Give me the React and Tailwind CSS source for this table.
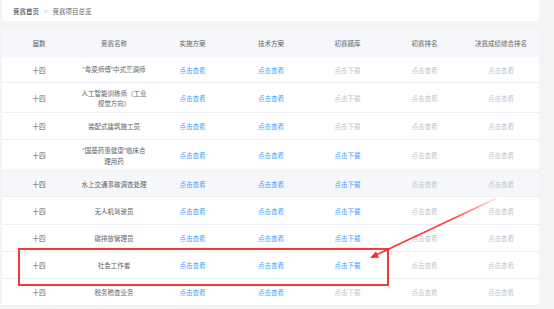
import React from "react";

const Q = ({ children }) => (
  <span style={{ fontFamily: '"Liberation Sans", sans-serif' }}>{children}</span>
);

const rows = [
  { name: [<><Q>“</Q>粤菜师傅<Q>”</Q>中式烹调师</>], h: "h-[26px]", dl: false },
  { name: ["人工智能训练师（工业", "视觉方向）"], h: "h-[30px]", dl: false },
  { name: ["装配式建筑施工员"], h: "h-[27px]", dl: false },
  { name: [<><Q>“</Q>国基药惠健康<Q>”</Q>临床合</>, "理用药"], h: "h-[31px]", dl: true },
  { name: ["水上交通事故调查处理"], h: "h-[26px]", dl: true, hover: true },
  { name: ["无人机驾驶员"], h: "h-[28px]", dl: true },
  { name: ["碳排放管理员"], h: "h-[27px]", dl: true },
  { name: ["社会工作者"], h: "h-[27px]", dl: true },
  { name: ["税务稽查业务"], h: "h-[27px]", dl: false },
];

const cols = "grid grid-cols-[74px_76px_81px_76px_77px_77px_76px]";

export default function App() {
  return (
    <div
      className="relative w-[554px] h-[309px] overflow-hidden bg-[#f3f4f6] text-[6.5px] leading-[10px] text-[#606266]"
      style={{ fontFamily: '"Noto Sans CJK SC", "Noto Sans", sans-serif' }}
    >
      <div className="ml-[2px] w-[537px] h-[21px] bg-white flex items-center px-[11px] gap-[3px]">
        <span className="text-[#303133]">竞赛首页</span>
        <span className="text-[#c0c4cc] mx-[2px]">&gt;</span>
        <span className="text-[#606266]">竞赛项目总览</span>
      </div>
      <div className="ml-[2px] w-[537px] mt-[7px] bg-white">
        <div className={`${cols} h-[29px] items-center text-center bg-[#f5f7fa] text-[#606266]`}>
          <div>届数</div>
          <div>竞赛名称</div>
          <div>实施方案</div>
          <div>技术方案</div>
          <div>初赛题库</div>
          <div>初赛排名</div>
          <div>决赛成绩综合排名</div>
        </div>
        {rows.map((r, i) => (
          <div
            key={i}
            className={`${cols} ${r.h} items-center text-center border-b border-[#ebeef5] ${r.hover ? "bg-[#f5f7fa]" : "bg-white"}`}
          >
            <div>十四</div>
            <div className="whitespace-nowrap">
              {r.name.map((l, j) => (
                <div key={j}>{l}</div>
              ))}
            </div>
            <div className="text-[#409eff]">点击查看</div>
            <div className="text-[#409eff]">点击查看</div>
            <div className={r.dl ? "text-[#409eff]" : "text-[#c0c4cc]"}>点击下载</div>
            <div className="text-[#c0c4cc]">点击查看</div>
            <div className="text-[#c0c4cc]">点击查看</div>
          </div>
        ))}
      </div>
      <div className="absolute left-[18px] top-[248px] w-[371px] h-[38px] border-2 border-[#f23a36]" />
      <svg className="absolute left-0 top-0" width="554" height="309">
        <defs>
          <linearGradient id="g" x1="497" y1="198" x2="370" y2="258" gradientUnits="userSpaceOnUse">
            <stop offset="0" stopColor="#ff2a2a" stopOpacity="0.1" />
            <stop offset="0.35" stopColor="#ff2a2a" stopOpacity="0.9" />
            <stop offset="1" stopColor="#ff2a2a" />
          </linearGradient>
        </defs>
        <line x1="497" y1="198" x2="375" y2="255.5" stroke="url(#g)" strokeWidth="1.6" />
        <polygon points="370,258 379,257.8 376,251.5" fill="#ff2a2a" />
      </svg>
    </div>
  );
}
